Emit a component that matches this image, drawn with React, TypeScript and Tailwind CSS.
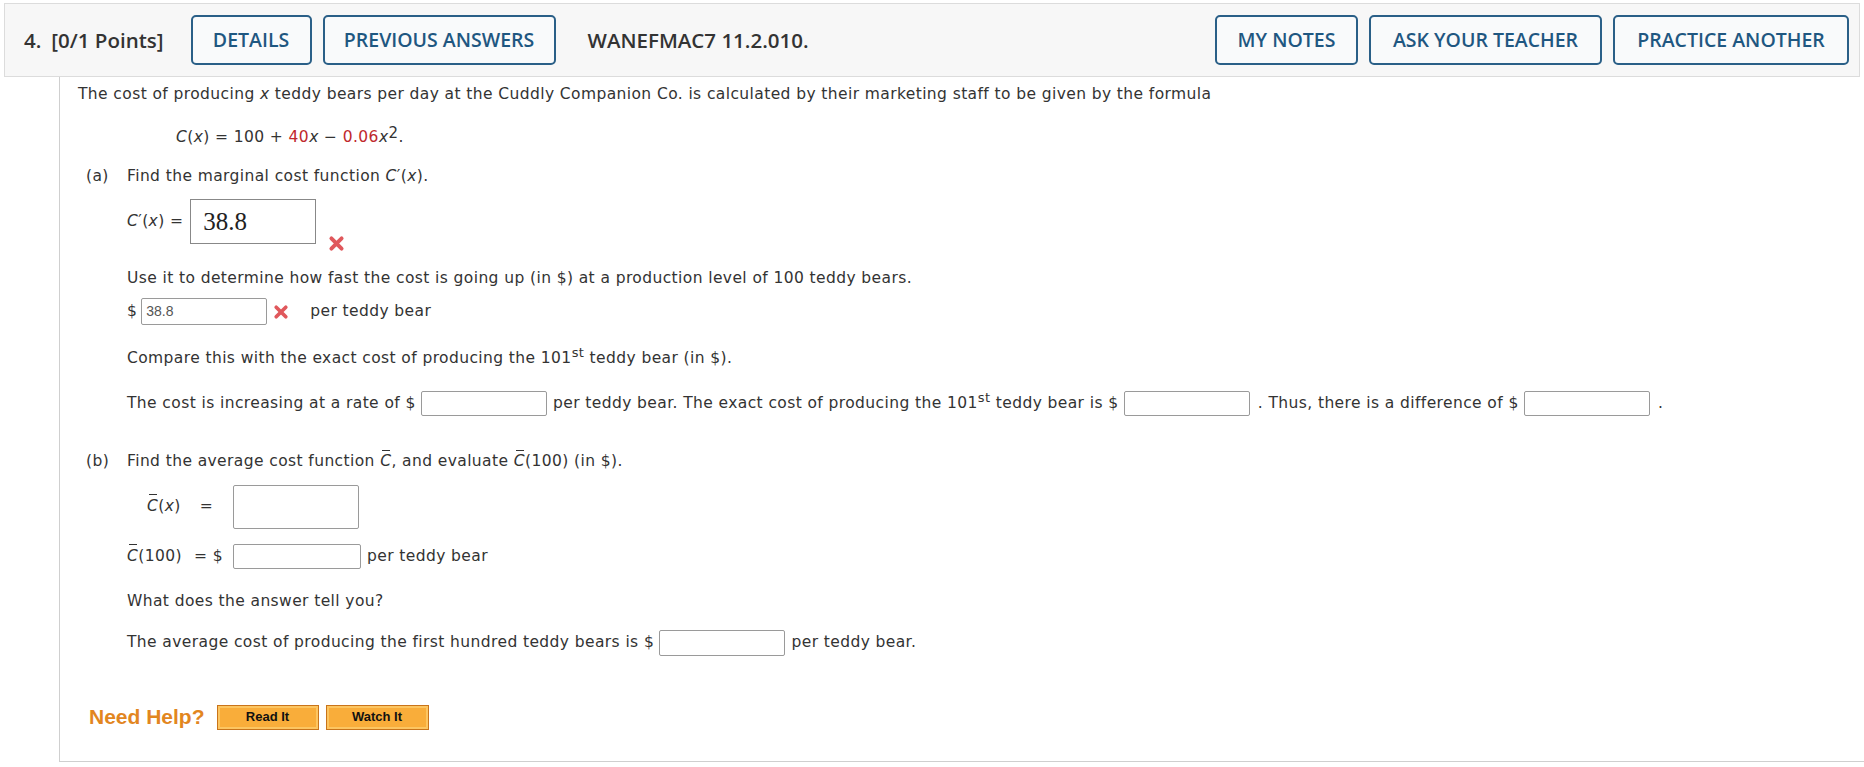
const Xmark = ({ size = 17 }: { size?: number }) => (
  <svg width={size} height={size} viewBox="0 0 20 20" className="shrink-0">
    <path d="M4 4 L16 16 M16 4 L4 16" stroke="#e0585c" strokeWidth="4.6" strokeLinecap="round" />
  </svg>
)

const Box = ({ w = "w-[126px]", h = "h-[25px]" }: { w?: string; h?: string }) => (
  <span className={`inline-block ${w} ${h} border border-[#9a9a9a] rounded-[2px] bg-white align-middle`} />
)

const Cbar = ({ children }: { children?: React.ReactNode }) => (
  <span>
    <span className="italic relative inline-block">
      <span className="absolute left-[2px] right-[1px] top-[-1px] border-t border-[#333]" />C
    </span>
    {children}
  </span>
)

const HeadBtn = ({ label, w }: { label: string; w: string }) => (
  <div className={`${w} h-[50px] flex items-center justify-center border-2 border-[#2a5f87] rounded-[5px] bg-[#f9fafb] text-[#1f5781] text-[19.5px] font-semibold`}>
    {label}
  </div>
)

const App = () => {
  return (
    <div className="w-[1864px] h-[767px] bg-white overflow-hidden text-[#333] font-['DejaVu_Sans',Verdana,sans-serif] text-[15.5px] tracking-[0.4px]">
      {/* header bar */}
      <div className="mx-[4px] mt-[3px] h-[74px] bg-[#f7f7f7] border border-[#dcdcdc] flex items-center pl-[19px] pr-[10px] font-['Open_Sans',sans-serif] tracking-normal">
        <div className="text-[20.5px] font-semibold text-[#333] flex gap-[10px]">
          <span>4.</span>
          <span>[0/1 Points]</span>
        </div>
        <div className="flex gap-[11px] ml-[27px]">
          <HeadBtn label="DETAILS" w="w-[121px]" />
          <HeadBtn label="PREVIOUS ANSWERS" w="w-[233px]" />
        </div>
        <div className="ml-[32px] text-[20.5px] font-semibold text-[#333]">WANEFMAC7 11.2.010.</div>
        <div className="ml-auto flex gap-[11px]">
          <HeadBtn label="MY NOTES" w="w-[143px]" />
          <HeadBtn label="ASK YOUR TEACHER" w="w-[233px]" />
          <HeadBtn label="PRACTICE ANOTHER" w="w-[236px]" />
        </div>
      </div>

      {/* question panel */}
      <div className="ml-[59px] border-l border-b border-[#cfcfcf] pl-[18px] pt-[7px] pb-[31px] h-[685px]">
        <div className="h-[20px] leading-[20px]">
          The cost of producing <i>x</i> teddy bears per day at the Cuddly Companion Co. is calculated by their marketing staff to be given by the formula
        </div>
        <div className="h-[20px] leading-[20px] mt-[23px] ml-[98px]">
          <i>C</i>(<i>x</i>) = 100 + <span className="text-[#c0282d]">40</span><i>x</i> − <span className="text-[#c0282d]">0.06</span><i>x</i>
          <sup className="text-[15px] relative top-[-4px]">2</sup>.
        </div>

        {/* part a */}
        <div className="flex h-[20px] leading-[20px] mt-[19px] ml-[8px]">
          <span className="w-[41px]">(a)</span>
          <span>
            Find the marginal cost function <i>C</i>′(<i>x</i>).
          </span>
        </div>
        <div className="ml-[49px]">
          <div className="flex items-start mt-[13px] h-[45px]">
            <div className="h-[45px] flex items-center gap-[7px]">
              <span>
                <i>C</i>′(<i>x</i>) =
              </span>
              <span className="w-[126px] h-[45px] border border-[#888] flex items-center pl-[12px] font-['Liberation_Serif',serif] text-[25px] tracking-normal text-[#222]">
                38.8
              </span>
            </div>
            <div className="mt-[36px] ml-[12px]">
              <Xmark />
            </div>
          </div>
          <div className="h-[20px] leading-[20px] mt-[24px]">
            Use it to determine how fast the cost is going up (in $) at a production level of 100 teddy bears.
          </div>
          <div className="flex items-center h-[27px] mt-[10px]">
            <span className="mr-[4px]">$</span>
            <span className="w-[126px] h-[27px] border border-[#9a9a9a] rounded-[2px] flex items-center pl-[4px] font-['Liberation_Sans',Arial,sans-serif] tracking-normal text-[14px] text-[#555]">
              38.8
            </span>
            <span className="ml-[6px]">
              <Xmark size={16} />
            </span>
            <span className="ml-[21px]">per teddy bear</span>
          </div>
          <div className="h-[20px] leading-[20px] mt-[23px]">
            Compare this with the exact cost of producing the 101
            <sup className="text-[13px] relative top-[-6px]">st</sup> teddy bear (in $).
          </div>
          <div className="flex items-center h-[25px] mt-[23px] whitespace-pre">
            <span>The cost is increasing at a rate of $ </span>
            <Box />
            <span className="ml-[6px]">
              per teddy bear. The exact cost of producing the 101<sup className="text-[13px] relative top-[-6px]">st</sup> teddy bear is ${" "}
            </span>
            <Box />
            <span className="ml-[8px]">. Thus, there is a difference of $ </span>
            <Box />
            <span className="ml-[8px]">.</span>
          </div>
        </div>

        {/* part b */}
        <div className="flex h-[20px] leading-[20px] mt-[35px] ml-[8px]">
          <span className="w-[41px]">(b)</span>
          <span>
            Find the average cost function <Cbar />, and evaluate <Cbar>(100)</Cbar> (in $).
          </span>
        </div>
        <div className="ml-[49px]">
          <div className="flex items-center h-[44px] mt-[14px]">
            <span className="w-[106px] pl-[20px] flex">
              <Cbar>
                (<i>x</i>)
              </Cbar>
              <span className="ml-[19px]">=</span>
            </span>
            <Box w="w-[126px]" h="h-[44px]" />
          </div>
          <div className="flex items-center h-[25px] mt-[15px]">
            <span className="w-[106px] flex">
              <Cbar>(100)</Cbar>
              <span className="ml-[12px]">= $</span>
            </span>
            <Box w="w-[128px]" />
            <span className="ml-[6px]">per teddy bear</span>
          </div>
          <div className="h-[20px] leading-[20px] mt-[22px]">What does the answer tell you?</div>
          <div className="flex items-center h-[26px] mt-[19px] whitespace-pre">
            <span>The average cost of producing the first hundred teddy bears is $ </span>
            <Box h="h-[26px]" />
            <span className="ml-[6px]">per teddy bear.</span>
          </div>
        </div>

        {/* help */}
        <div className="flex items-center mt-[47px] ml-[11px] h-[28px] font-['Liberation_Sans',Arial,sans-serif] tracking-normal">
          <span className="text-[#e2861f] text-[21px] font-bold mr-[12px]">Need Help?</span>
          <div className="flex gap-[7px]">
            <div className="w-[102px] h-[25px] border border-[#c9741a] bg-[#f9ad3a] shadow-[inset_0_0_0_2px_#fcc561] flex items-center justify-center text-[13px] font-bold text-[#111]">
              Read It
            </div>
            <div className="w-[103px] h-[25px] border border-[#c9741a] bg-[#f9ad3a] shadow-[inset_0_0_0_2px_#fcc561] flex items-center justify-center text-[13px] font-bold text-[#111]">
              Watch It
            </div>
          </div>
        </div>
      </div>
    </div>
  )
}

export default App
